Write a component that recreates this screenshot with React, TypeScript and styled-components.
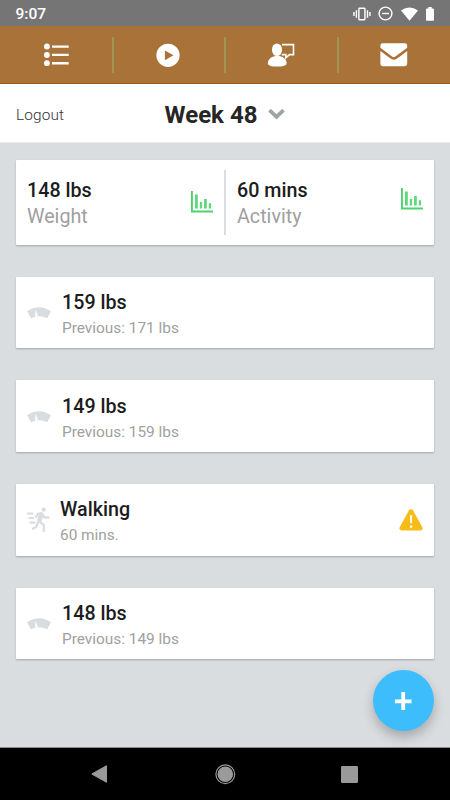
import React from "react";
import styled, { createGlobalStyle } from "styled-components";

const GlobalStyle = createGlobalStyle`
  * { box-sizing: border-box; }
  body { margin: 0; background: #dadde0; font-family: Roboto, "Liberation Sans", sans-serif; }
  svg { display: block; flex: none; }
`;

const Screen = styled.div`
  width: 450px;
  height: 800px;
  display: flex;
  flex-direction: column;
  position: relative;
  overflow: hidden;
  background: #dadde0;
`;

const StatusBar = styled.div`
  height: 26px;
  flex: none;
  background: #757575;
  color: #fff;
  display: flex;
  align-items: center;
  justify-content: space-between;
  padding: 1px 16px 0 15.5px;
  font-size: 15.5px;
  line-height: 20px;
  font-weight: 500;
`;

const StatusIcons = styled.div`
  display: flex;
  align-items: center;
  gap: 7.8px;
`;

const TabBar = styled.nav`
  height: 58px;
  flex: none;
  display: grid;
  grid-template-columns: repeat(4, 1fr);
  background: #a87239;
  border-bottom: 1px solid #995911;
`;

const Tab = styled.div<{ $divided?: boolean }>`
  display: flex;
  align-items: center;
  justify-content: center;
  margin: 11px ${(p) => (p.$divided ? "-1px" : "0")} 10px 0;
  border-right: ${(p) => (p.$divided ? "2px solid #a09558" : "none")};
`;

const Header = styled.header`
  height: 59px;
  flex: none;
  display: grid;
  grid-template-columns: 1fr auto 1fr;
  align-items: center;
  padding: 3px 16px 0;
  background: #fff;
  border-bottom: 1px solid #ececee;
`;

const Logout = styled.span`
  font-size: 15.4px;
  letter-spacing: 0.15px;
  font-weight: 300;
  color: #333;
`;

const WeekPicker = styled.div`
  display: flex;
  align-items: center;
  gap: 11px;
  font-size: 24px;
  font-weight: 700;
  color: #262626;
`;

const Content = styled.main`
  flex: 1;
  padding: 17px 16px 0;
  display: flex;
  flex-direction: column;
  gap: 32px;
`;

const Card = styled.section`
  background: #fff;
  border-radius: 1px;
  box-shadow: 0 1px 2px rgba(0, 0, 0, 0.26);
  display: flex;
  flex: none;
`;

const SummaryCard = styled(Card)`
  height: 84.5px;
  padding: 10px 0;
`;

const Stat = styled.div<{ $last?: boolean }>`
  width: ${(p) => (p.$last ? "208px" : "210px")};
  display: flex;
  justify-content: space-between;
  padding: 8px 11px 0;
  border-right: ${(p) => (p.$last ? "none" : "2px solid #dadde0")};
`;

const ChartSlot = styled.div<{ $top: number }>`
  padding-top: ${(p) => p.$top}px;
`;

const Value = styled.div`
  font-size: 19.7px;
  line-height: 26px;
  font-weight: 500;
  color: #1c1c1c;
`;

const StatLabel = styled.div`
  font-size: 19.7px;
  line-height: 26px;
  color: #a0a0a0;
  font-weight: 400;
`;

const EntryCard = styled(Card)`
  height: 71.7px;
  align-items: center;
  padding: 0 11px;
`;

const EntryText = styled.div<{ $indent: number }>`
  flex: 1;
  padding-top: 6px;
  margin-left: ${(p) => p.$indent}px;
`;

const EntryDetail = styled.div`
  font-size: 15.4px;
  line-height: 25px;
  color: #a0a0a0;
`;

const AddButton = styled.button`
  position: absolute;
  left: 372.5px;
  top: 670px;
  width: 61px;
  height: 61px;
  padding: 0;
  border: 0;
  border-radius: 50%;
  background: #3dbdfc;
  display: flex;
  align-items: center;
  justify-content: center;
  box-shadow: 0 6px 12px rgba(0, 0, 0, 0.24);
`;

const SystemBar = styled.footer`
  height: 53px;
  flex: none;
  display: grid;
  grid-template-columns: 163px 124px 163px;
  align-items: center;
  background: #000;
  border-top: 1px solid #8a8c8e;
`;

const SystemKey = styled.div<{ $side: "start" | "center" | "end" }>`
  display: flex;
  justify-content: ${(p) => p.$side};
  padding: ${(p) => (p.$side === "start" ? "0 0 0 91px" : p.$side === "end" ? "0 92px 0 0" : "0")};
`;

const VibrateIcon = () => (
  <svg width="18" height="16" viewBox="0 0 19 16" fill="none" stroke="#fff" strokeWidth="1.5">
    <rect x="6.2" y="2" width="6.4" height="12" rx="0.8" />
    <path d="M3.6 4v8M1 6v4M15.3 4v8M17.9 6v4" />
  </svg>
);

const DisturbIcon = () => (
  <svg width="15" height="15" viewBox="0 0 15 15" fill="none" stroke="#fff" strokeWidth="1.4">
    <circle cx="7.5" cy="7.5" r="6.4" />
    <path d="M4 7.5h7" />
  </svg>
);

const WifiIcon = () => (
  <svg width="17" height="14" viewBox="0 0 18 14" fill="#fff" preserveAspectRatio="none">
    <path d="M0 3.4Q9-2.5 18 3.4L9 13.8z" />
  </svg>
);

const BatteryIcon = () => (
  <svg width="8" height="14" viewBox="0 0 8 14" fill="#fff">
    <path d="M2.3 0h3.4v1.5H7q1 0 1 1v10.3q0 1-1 1H1q-1 0-1-1V2.5q0-1 1-1h1.3z" />
  </svg>
);

const ListIcon = () => (
  <svg width="26" height="24" viewBox="0 0 26 24" fill="#fff">
    <circle cx="3.9" cy="3.5" r="2.9" />
    <circle cx="3.9" cy="12" r="2.9" />
    <circle cx="3.9" cy="20.2" r="2.9" />
    <path d="M9 2.4H25.700v2.300H9zM9 10.800H25.700v2.300H9zM9 19.100H25.700v2.300H9z" />
  </svg>
);

const PlayIcon = () => (
  <svg width="24" height="24" viewBox="0 0 24 24">
    <circle cx="12" cy="12.3" r="11.6" fill="#fff" />
    <path d="M8.900 7.400v9.800l8.600-4.900z" fill="#a87239" />
  </svg>
);

const CoachIcon = () => (
  <svg width="28" height="24" viewBox="0 0 28 24">
    <path d="M15 1.6h11.5v10H22.500l-3.700 3.200V11.600h-4" fill="none" stroke="#fff" strokeWidth="1.6" />
    <ellipse cx="10" cy="6.8" rx="5.1" ry="6.3" fill="#fff" />
    <path d="M.8 20.500C1 15.500 5 13 10.300 13s9.300 2.500 9.300 7.500C19.600 22.500 16 23.600 10.200 23.600S.8 22.500.8 20.500z" fill="#fff" />
  </svg>
);

const MailIcon = () => (
  <svg width="28" height="24" viewBox="0 0 28 24" fill="#fff">
    <path d="M2.6.3h22.200q2.400 0 2.400 2.400v2q-5.300 3.900-11.800 8.900-1.700 1.200-3.400 0Q6 9 .4 4.800V2.700Q.4.300 2.600.3z" />
    <path d="M.4 7.900q5.500 4.400 11 8.100 2.500 1.500 5 0 5-3.500 10.800-8.100v12.900q0 2.400-2.400 2.400H2.600q-2.200 0-2.200-2.400z" />
  </svg>
);

const ChevronIcon = () => (
  <svg width="17" height="12" viewBox="0 0 17 12" fill="none" stroke="#9fa4a7" strokeWidth="3.8">
    <path d="M1.500 1.200l7 6.600 7-6.600" />
  </svg>
);

const ChartIcon = () => (
  <svg width="23" height="23" viewBox="0 0 23 23" fill="#4dd46d">
    <path d="M1 1h1.900v19.600H23v2H1z" />
    <path d="M5 4.500h2.800v14H5zM9.800 12h2.300v6.500H9.800zM14 8.900h2.800v9.600H14zM18.800 13.300h2.300v5.200h-2.300z" opacity=".9" />
  </svg>
);

const ScaleIcon = () => (
  <svg width="24" height="13" viewBox="0 0 24 13">
    <path d="M0 5.300Q12-3 24 5.300L20.200 12.200Q12 8.400 4 12.200z" fill="#dadde0" />
    <path d="M8.300 3.300l2.300 6q.2 1.700-1 1.700t-1.300-1.700z" fill="#fff" />
  </svg>
);

const RunnerIcon = () => (
  <svg width="23" height="26" viewBox="0 0 23 26" fill="none" stroke="#dadde0" strokeLinecap="round" strokeLinejoin="round">
    <circle cx="16.7" cy="2.6" r="2.2" fill="#dadde0" stroke="none" />
    <path d="M9 10l2-3.400 3.500-.1" strokeWidth="2.2" />
    <path d="M14.200 7.500l-1.800 6" strokeWidth="4.6" />
    <path d="M15.200 7.500l2.500 3h4M12.500 14.500l4.200 3.300v6.200M10.700 16l-1.500 4-3.400 1.800" strokeWidth="2.3" />
    <path d="M1 6.600h4.500M2.300 11h3.900M3.500 15.600h4" strokeWidth="2.1" />
  </svg>
);

const WarningIcon = () => (
  <svg width="24" height="22" viewBox="0 0 24 22">
    <path d="M10 1.300q2-2.200 4 0l9.300 17q1 3-1.800 3.200h-19Q-.2 21.300.7 18.300z" fill="#f6bd18" />
    <path d="M11 6.200h2.200l-.2 8h-1.800zM11 16.500h2.200v2.200H11z" fill="#fff" />
  </svg>
);

const PlusIcon = () => (
  <svg width="18" height="18" viewBox="0 0 18 18" stroke="#fff" strokeWidth="3.8">
    <path d="M9.200 0v18M.9 9.300h16.600" />
  </svg>
);

const BackIcon = () => (
  <svg width="16" height="18" viewBox="0 0 16 18" fill="#9a9a9a" stroke="#9a9a9a" strokeLinejoin="round">
    <path d="M.8 9L15.500.7v16.600z" />
  </svg>
);

const HomeIcon = () => (
  <svg width="21" height="21" viewBox="0 0 21 21">
    <circle cx="10.3" cy="10.2" r="9.4" fill="none" stroke="#9a9a9a" strokeWidth="1.2" />
    <circle cx="10.3" cy="10.2" r="7.8" fill="#9a9a9a" />
  </svg>
);

const RecentsIcon = () => (
  <svg width="17" height="17" viewBox="0 0 17 17">
    <rect width="17" height="17" rx="1.2" fill="#9a9a9a" />
  </svg>
);

type Entry = { title: string; detail: string; kind: "weight" | "activity"; warning?: boolean };

const entries: Entry[] = [
  { title: "159 lbs", detail: "Previous: 171 lbs", kind: "weight" },
  { title: "149 lbs", detail: "Previous: 159 lbs", kind: "weight" },
  { title: "Walking", detail: "60 mins.", kind: "activity", warning: true },
  { title: "148 lbs", detail: "Previous: 149 lbs", kind: "weight" },
];

export default function App() {
  return (
    <>
      <GlobalStyle />
      <Screen>
        <StatusBar>
          <span>9:07</span>
          <StatusIcons>
            <VibrateIcon />
            <DisturbIcon />
            <WifiIcon />
            <BatteryIcon />
          </StatusIcons>
        </StatusBar>
        <TabBar>
          <Tab $divided><ListIcon /></Tab>
          <Tab $divided><PlayIcon /></Tab>
          <Tab $divided><CoachIcon /></Tab>
          <Tab><MailIcon /></Tab>
        </TabBar>
        <Header>
          <Logout>Logout</Logout>
          <WeekPicker>
            Week 48
            <ChevronIcon />
          </WeekPicker>
        </Header>
        <Content>
          <SummaryCard>
            <Stat>
              <div>
                <Value>148 lbs</Value>
                <StatLabel>Weight</StatLabel>
              </div>
              <ChartSlot $top={12}><ChartIcon /></ChartSlot>
            </Stat>
            <Stat $last>
              <div>
                <Value>60 mins</Value>
                <StatLabel>Activity</StatLabel>
              </div>
              <ChartSlot $top={9}><ChartIcon /></ChartSlot>
            </Stat>
          </SummaryCard>
          {entries.map((entry) => (
            <EntryCard key={entry.title}>
              {entry.kind === "weight" ? <ScaleIcon /> : <RunnerIcon />}
              <EntryText $indent={entry.kind === "weight" ? 11 : 10}>
                <Value>{entry.title}</Value>
                <EntryDetail>{entry.detail}</EntryDetail>
              </EntryText>
              {entry.warning && <WarningIcon />}
            </EntryCard>
          ))}
        </Content>
        <AddButton aria-label="Add entry"><PlusIcon /></AddButton>
        <SystemBar>
          <SystemKey $side="start"><BackIcon /></SystemKey>
          <SystemKey $side="center"><HomeIcon /></SystemKey>
          <SystemKey $side="end"><RecentsIcon /></SystemKey>
        </SystemBar>
      </Screen>
    </>
  );
}
